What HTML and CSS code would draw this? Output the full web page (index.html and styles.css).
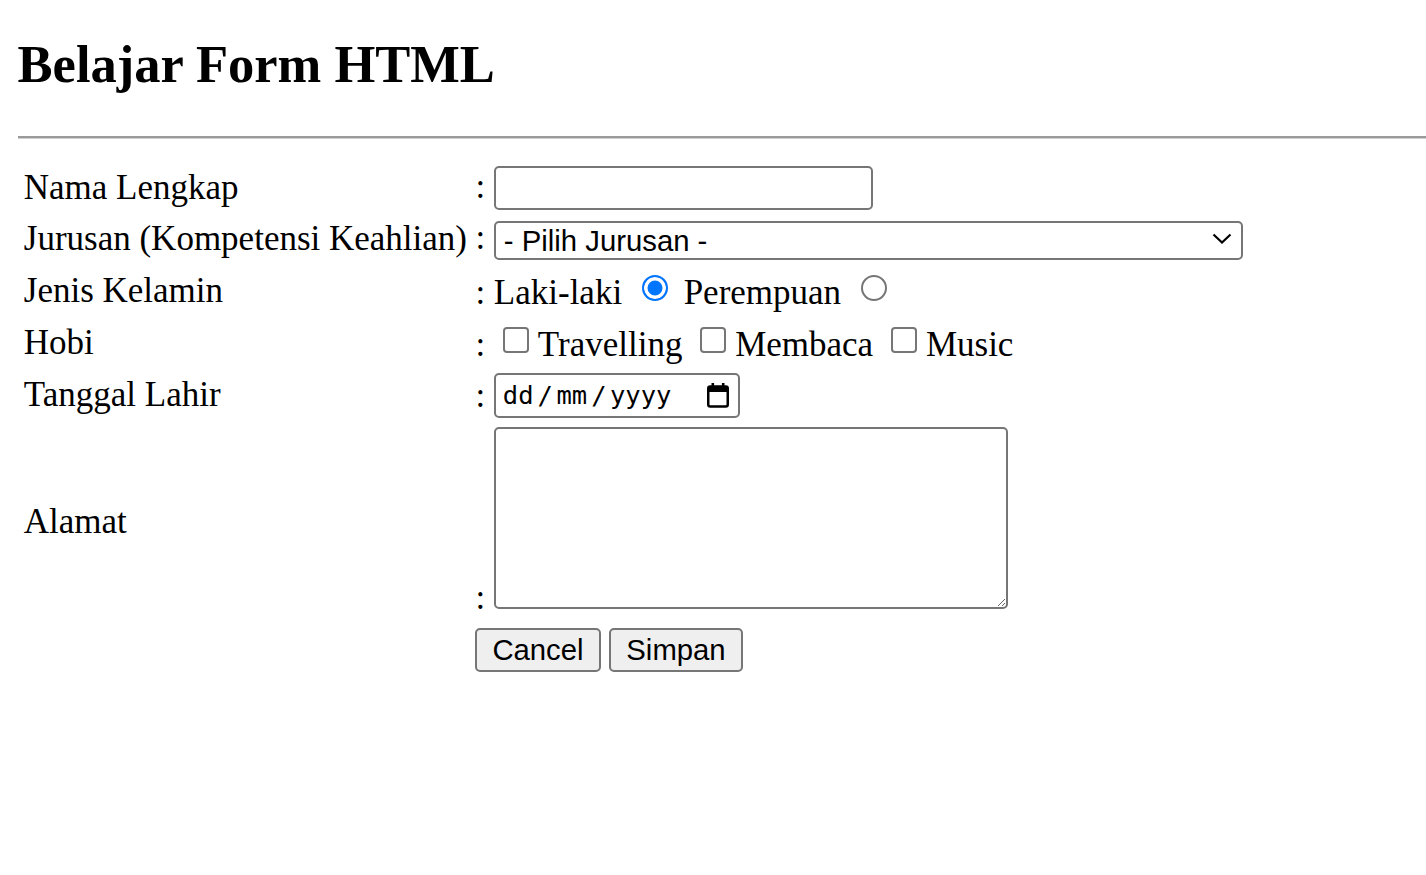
FILE: index.html
```html
<!DOCTYPE html>
<html lang="id">
<head>
<meta charset="utf-8">
<title>Belajar Form HTML</title>
<link rel="stylesheet" href="styles.css">
</head>
<body>
<h1 class="title">Belajar Form HTML</h1>
<hr class="rule">
<form class="form">
<table class="form-table">
<tr>
<td class="label">Nama Lengkap</td>
<td class="field">: <input class="text-input" type="text"></td>
</tr>
<tr>
<td class="label">Jurusan (Kompetensi Keahlian)</td>
<td class="field">: <span class="select-wrap"><select class="select"><option>- Pilih Jurusan -</option></select><svg class="chevron" width="20" height="11" viewBox="0 0 20 11"><path d="M1.5 1.5 L10 9.5 L18.5 1.5" fill="none" stroke="#000" stroke-width="2.2"/></svg></span></td>
</tr>
<tr>
<td class="label">Jenis Kelamin</td>
<td class="field">: Laki-laki <input class="radio" type="radio" name="jk" checked> Perempuan <input class="radio" type="radio" name="jk"></td>
</tr>
<tr>
<td class="label">Hobi</td>
<td class="field">: <input class="check" type="checkbox">Travelling <input class="check" type="checkbox">Membaca <input class="check" type="checkbox">Music</td>
</tr>
<tr>
<td class="label">Tanggal Lahir</td>
<td class="field">: <span class="date"><span class="date-text"><span>dd</span><span class="sep">/</span><span>mm</span><span class="sep">/</span><span>yyyy</span></span><svg class="cal" width="22" height="25" viewBox="0 0 22 25"><rect x="1.25" y="3.5" width="19.5" height="20" rx="2" fill="none" stroke="#000" stroke-width="2.5"/><rect x="1.25" y="3.5" width="19.5" height="5.5" fill="#000"/><rect x="4.5" y="0" width="2.6" height="5" fill="#000"/><rect x="14.9" y="0" width="2.6" height="5" fill="#000"/></svg></span></td>
</tr>
<tr>
<td class="label">Alamat</td>
<td class="field">: <textarea class="area"></textarea></td>
</tr>
<tr class="actions">
<td class="label"></td>
<td class="field"><button class="btn" type="button">Cancel</button> <button class="btn" type="button">Simpan</button></td>
</tr>
</table>
</form>
</body>
</html>
```

FILE: styles.css
```css
html, body {
  margin: 0;
  padding: 0;
  background: #fff;
}
body {
  padding-left: 17.6px;
  font-family: "Liberation Serif", "Times New Roman", serif;
  font-size: 35px;
  color: #000;
}
.title {
  font-size: 52.5px;
  font-weight: bold;
  margin: 34px 0 0;
  padding-bottom: 42px;
  line-height: normal;
}
.rule {
  margin: 0;
  height: 0;
  border: 0;
  border-top: 2px solid #9a9a9a;
  border-bottom: 1px solid #cfcfcf;
}
.form {
  margin: 0;
  padding-top: 20.6px;
}
.form-table {
  border-spacing: 4.4px;
}
.form-table td {
  padding: 2.2px;
  vertical-align: middle;
  white-space: nowrap;
}
.actions td {
  padding-top: 3.2px;
}
.text-input,
.select,
.area,
.btn {
  font-family: "Liberation Sans", Arial, sans-serif;
  font-size: 29.3px;
  box-sizing: border-box;
  border: 2px solid #767676;
  border-radius: 5px;
  color: #000;
  margin: 0;
}
.text-input {
  width: 379px;
  height: 44px;
  padding: 2px 4px;
  background: #fff;
}
.select-wrap {
  position: relative;
  display: inline-block;
  vertical-align: -2px;
}
.select {
  appearance: none;
  -webkit-appearance: none;
  width: 749px;
  height: 39px;
  padding: 0 40px 0 8px;
  background: #fff;
  vertical-align: baseline;
}
.chevron {
  position: absolute;
  right: 11px;
  top: 13px;
}
.radio,
.check {
  appearance: none;
  -webkit-appearance: none;
  box-sizing: border-box;
  width: 26px;
  height: 26px;
  border: 2px solid #767676;
  background: #fff;
  vertical-align: baseline;
}
.radio {
  border-radius: 50%;
  margin: 6px 7px 3px 11px;
}
.radio:checked {
  border: 2.5px solid #0075ff;
  background: #0075ff;
  box-shadow: inset 0 0 0 3.5px #fff;
}
.check {
  border-radius: 4px;
  margin: 6.5px 9px 2px 9px;
}
.date {
  display: inline-flex;
  align-items: center;
  justify-content: space-between;
  box-sizing: border-box;
  width: 246px;
  height: 45px;
  padding: 0 9px 0 7px;
  border: 2px solid #767676;
  border-radius: 5px;
  vertical-align: 2px;
}
.date-text {
  font-family: "DejaVu Sans Mono", monospace;
  font-size: 25.5px;
  display: flex;
  align-items: baseline;
}
.sep {
  margin: 0 3.5px 0 4px;
}
.cal {
  display: block;
}
.area {
  width: 514px;
  height: 182px;
  padding: 2px;
  margin-top: 1px;
  background: #fff;
  vertical-align: baseline;
}
.btn {
  height: 44px;
  padding: 0 15px;
  background: #efefef;
}
```
